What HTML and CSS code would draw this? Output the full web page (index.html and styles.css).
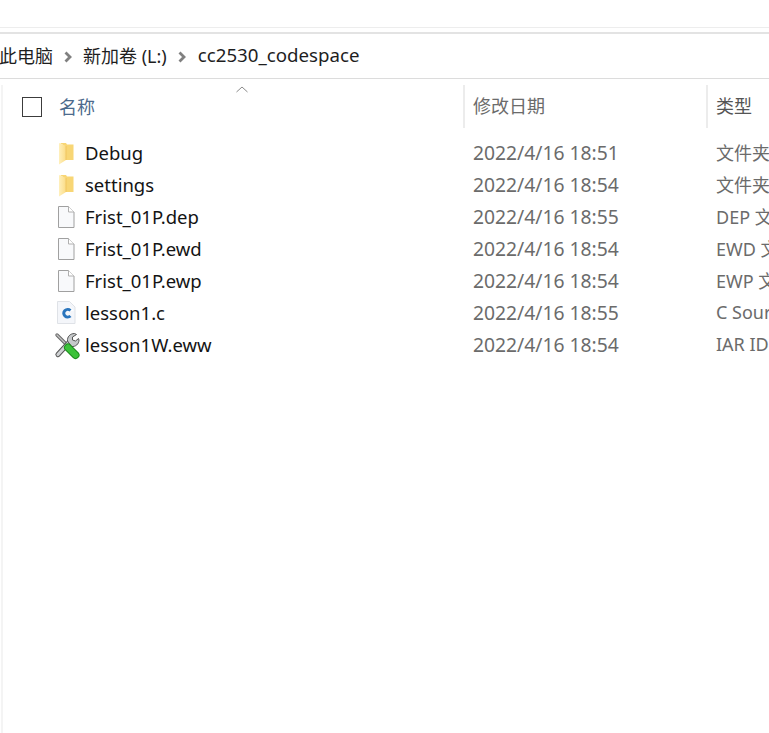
FILE: index.html
```html
<!DOCTYPE html>
<html lang="zh">
<head>
<meta charset="utf-8">
<title>cc2530_codespace</title>
<link rel="stylesheet" href="styles.css">
</head>
<body>
<svg class="defs" width="0" height="0" aria-hidden="true">
  <defs>
    <linearGradient id="fold" x1="0" y1="0" x2="1" y2="0">
      <stop offset="0" stop-color="#fff0bd"/><stop offset="1" stop-color="#fbdc86"/>
    </linearGradient>
    <symbol id="folder" viewBox="0 0 24 24">
      <path d="M5 2h6l1 1.500h6.500V19H8V4z" fill="#f8d675"/>
      <path d="M4 2l7 3v14l-7 4.500z" fill="url(#fold)"/>
      <path d="M11 5v14" stroke="#eec25a" stroke-width=".8"/>
    </symbol>
    <symbol id="file" viewBox="0 0 24 24">
      <path d="M3.500 1.500h10l5.500 5.500v15.500H3.500z" fill="#f8f9fb" stroke="#a0a0a0"/>
      <path d="M13.500 1.500V7H19" fill="#fff" stroke="#b0b0b0"/>
    </symbol>
  </defs>
</svg>
<div class="top-band"></div>
<nav class="crumbs">
  <span class="crumb">此电脑</span>
  <svg class="chev" viewBox="0 0 8 12"><path d="M1.500 1.500L6 6l-4.500 4.500" fill="none" stroke="#808080" stroke-width="2.800"/></svg>
  <span class="crumb">新加卷 (L:)</span>
  <svg class="chev" viewBox="0 0 8 12"><path d="M1.500 1.500L6 6l-4.500 4.500" fill="none" stroke="#808080" stroke-width="2.800"/></svg>
  <span class="crumb crumb-last">cc2530_codespace</span>
</nav>
<main class="pane">
  <svg class="sort" viewBox="0 0 12 7"><path d="M.5 6L6 1l5.500 5" fill="none" stroke="#8a8a8a"/></svg>
  <header class="head">
    <div class="c-name"><span class="check"></span><span class="head-label">名称</span></div>
    <div class="c-date">修改日期</div>
    <div class="c-type">类型</div>
  </header>
  <div class="rows">
    <div class="row"><div class="c-name"><svg class="ico"><use href="#folder"/></svg><span class="fn">Debug</span></div><div class="c-date">2022/4/16 18:51</div><div class="c-type">文件夹</div></div>
    <div class="row"><div class="c-name"><svg class="ico"><use href="#folder"/></svg><span class="fn">settings</span></div><div class="c-date">2022/4/16 18:54</div><div class="c-type">文件夹</div></div>
    <div class="row"><div class="c-name"><svg class="ico"><use href="#file"/></svg><span class="fn">Frist_01P.dep</span></div><div class="c-date">2022/4/16 18:55</div><div class="c-type">DEP 文件</div></div>
    <div class="row"><div class="c-name"><svg class="ico"><use href="#file"/></svg><span class="fn">Frist_01P.ewd</span></div><div class="c-date">2022/4/16 18:54</div><div class="c-type">EWD 文件</div></div>
    <div class="row"><div class="c-name"><svg class="ico"><use href="#file"/></svg><span class="fn">Frist_01P.ewp</span></div><div class="c-date">2022/4/16 18:54</div><div class="c-type">EWP 文件</div></div>
    <div class="row"><div class="c-name"><svg class="ico" viewBox="0 0 24 24">
      <path d="M2.500 .5h12l5.500 5.500v16.500H2.500z" fill="#f4f6fa" stroke="#dfe2e7"/>
      <path d="M14.500 5v5H19z" fill="#fff"/>
      <path d="M15.500 9.500a4 3.800 0 1 0 0 5.500" fill="none" stroke="#2a75bd" stroke-width="3"/>
    </svg><span class="fn">lesson1.c</span></div><div class="c-date">2022/4/16 18:55</div><div class="c-type">C Source</div></div>
    <div class="row"><div class="c-name"><svg class="ico" viewBox="0 0 24 24">
      <path d="M2 2l11 11" stroke="#6a6a6a" stroke-width="3.400" stroke-linecap="round"/>
      <path d="M2 2l11 11" stroke="#c2c2c2" stroke-width="1.400" stroke-linecap="round"/>
      <path d="M3 21.500L15 8.500" stroke="#555" stroke-width="5.200" stroke-linecap="round"/>
      <path d="M3 21.500L15 8.500" stroke="#cfd2d4" stroke-width="3.200" stroke-linecap="round"/>
      <path d="M12.500 8c-.5-4 2.500-7.500 7-7.500l2 1-4 2.500v3l3 1 3-2.500.5 1.500c0 4-3.500 7-7.500 6.500z" fill="#c6c9cb" stroke="#555" stroke-width="1"/>
      <path d="M13 14.500l7.500 7.500" stroke="#1c8a1c" stroke-width="8" stroke-linecap="round"/>
      <path d="M13 14.500l7.500 7.500" stroke="#3cc23a" stroke-width="6" stroke-linecap="round"/>
    </svg><span class="fn">lesson1W.eww</span></div><div class="c-date">2022/4/16 18:54</div><div class="c-type">IAR IDE</div></div>
  </div>
</main>
</body>
</html>
```
FILE: styles.css
```css
* { box-sizing: border-box; }
html, body { margin: 0; height: 100%; background: #fff; overflow: hidden; }
body {
  font-family: "Noto Sans", "Noto Sans CJK SC", sans-serif;
  font-size: 18px;
  color: #1a1a1a;
}
.defs { position: absolute; }
.top-band { height: 34px; border-bottom: 2px solid #e3e3e3; position: relative; }
.top-band::before {
  content: ""; position: absolute; left: 0; right: 0; top: 27px; height: 1px; background: #ededed;
}
.crumbs {
  height: 45px;
  border-bottom: 1px solid #dcdcdc;
  display: flex;
  align-items: center;
  white-space: nowrap;
  padding-bottom: 2px;
}
.crumb { color: #1e1e1e; }
.crumbs .crumb:first-child { margin-left: -1px; }
.crumb-last { margin: 0 0 2px 1px; font-size: 18.7px; }
.chev { width: 8px; height: 12px; margin: 3px 11px 0 11px; flex: none; }
.pane {
  position: relative;
  margin: 6px 0 0 1px;
  height: 650px;
  border-left: 2px solid #f4f4f4;
  overflow: hidden;
}
.sort { position: absolute; left: 233px; top: 1px; width: 12px; height: 7px; }
.head {
  display: flex;
  height: 43px;
  align-items: center;
  color: #4c6a8c;
}
.head .c-name { gap: 17px; padding-left: 19px; }
.head-label { margin-top: -2px; }
.head .c-date, .head .c-type { border-left: 2px solid #ececec; height: 43px; line-height: 43px; padding: 0 0 0 8px; font-size: 18px; }
.head .c-type { color: #555; }
.check { width: 20px; height: 20px; border: 1px solid #3c3c3c; display: block; flex: none; }
.rows { margin-top: 9px; }
.row { display: flex; height: 32px; align-items: center; white-space: nowrap; }
.c-name { width: 460px; display: flex; align-items: center; flex: none; padding-left: 52px; }
.c-date { width: 243px; flex: none; padding: 0 0 1px 10px; color: #6b6b6b; font-size: 19.3px; }
.c-type { flex: none; padding: 0 0 2px 10px; color: #6b6b6b; }
.ico { width: 24px; height: 24px; flex: none; margin-right: 6px; overflow: visible; }
.fn { color: #141414; font-size: 18.5px; margin-bottom: 2px; }
```
